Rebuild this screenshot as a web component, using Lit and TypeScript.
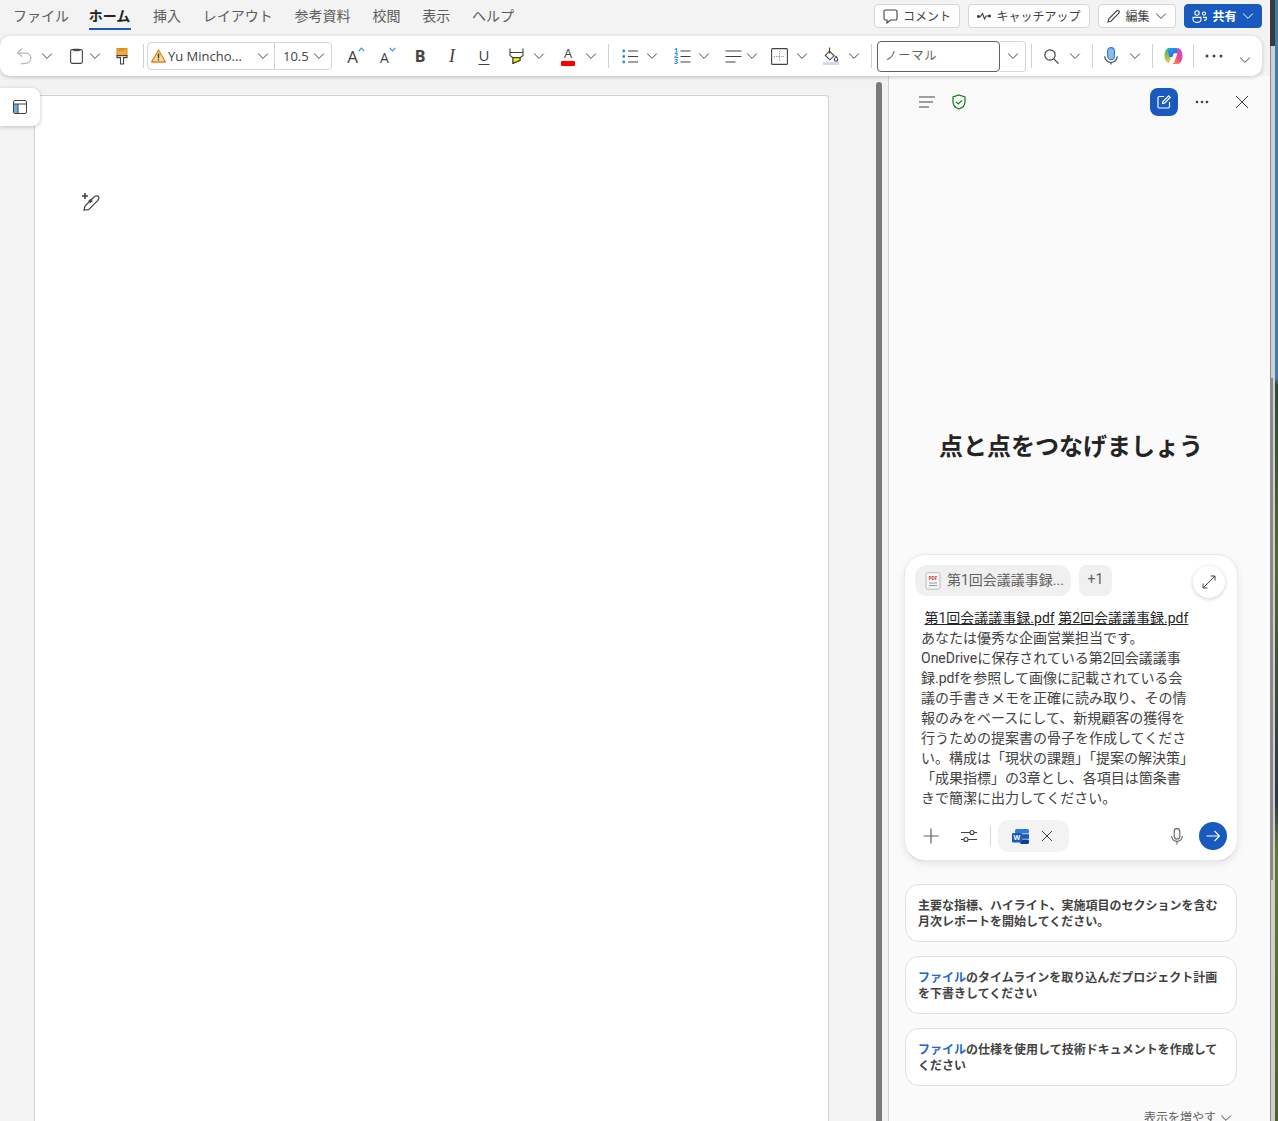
import { LitElement, html, svg, css } from "lit";
import { customElement } from "lit/decorators.js";

const chev = html`<svg class="chev" width="12" height="12" viewBox="0 0 12 12"><path d="M1.2 3.6L6 8.4l4.8-4.8" fill="none" stroke="#424242" stroke-width="1"/></svg>`;
const icon = (w: number, h: number, body: unknown) =>
  html`<svg width=${w} height=${h} viewBox="0 0 ${w} ${h}" fill="none" stroke="#424242" stroke-width="1.1">${body}</svg>`;

const undo = icon(16, 18, svg`<path d="M6 1.5L1.6 6l4.8 3.8" stroke="#b5b5b5" stroke-width="1.2"/><path d="M2 6.2h7.6a5 5 0 0 1 1.2 9.9L5 16.8" stroke="#b5b5b5" stroke-width="1.2"/>`);
const clip = icon(13, 16, svg`<rect x=".6" y="1.6" width="11.8" height="13.8" rx="1.6"/><path d="M3.6 1.2h5.8v1.5H3.6z" fill="#424242" stroke-width=".8"/>`);
const brush = icon(12, 17, svg`<path d="M1 .6h10v7H1z" fill="#f4a93c" stroke="#e08d1d"/><path d="M4 .8v2.4M7 .8v2.4" stroke="#c77a10"/><path d="M1 7.6h10v2H7.5v6.4h-3V9.6H1z" fill="#fff" stroke="#424242"/>`);
const warn = icon(15, 14, svg`<path d="M7.5 1L14.4 13H.6z" fill="#fcdc9b" stroke="#e2801a" stroke-width="1.3" stroke-linejoin="round"/><path d="M7.5 4.6v4.6M7.5 10.2v1.4" stroke="#333" stroke-width="1.4"/>`);
const grow = html`<span class="aa"><span class="a-big">A</span><svg width="7" height="5" viewBox="0 0 7 5"><path d="M.8 4.2L3.5 1l2.7 3.2" fill="none" stroke="#2b88d8" stroke-width="1.1"/></svg></span>`;
const shrink = html`<span class="aa"><span class="a-small">A</span><svg width="7" height="5" viewBox="0 0 7 5"><path d="M.8 .8L3.5 4l2.7-3.2" fill="none" stroke="#2b88d8" stroke-width="1.1"/></svg></span>`;
const highlight = icon(15, 16, svg`<path d="M1 .5v4h13v-4M1 4.5v3l3 2.2v5.6l7-3V9.7l3-2.2v-3" />
  <path d="M4 9.6h7v2.7l-7 3z" fill="#fff200" stroke="#424242"/>`);
const fontColor = html`<span class="fcolor"><span>A</span><i></i></span>`;
const bullets = icon(16, 15, svg`<circle cx="1.8" cy="2" r="1.4" fill="#2b88d8" stroke="none"/><circle cx="1.8" cy="7.5" r="1.4" fill="#2b88d8" stroke="none"/><circle cx="1.8" cy="13" r="1.4" fill="#2b88d8" stroke="none"/><path d="M6 2h10M6 7.5h10M6 13h10"/>`);
const numbers = html`<span class="numlist"><span class="nums">1 2 3</span>${icon(11, 15, svg`<path d="M.5 2h10M.5 7.5h10M.5 13h10"/>`)}</span>`;
const align = icon(17, 15, svg`<path d="M.5 2h16M.5 7.5h16M.5 13h10"/>`);
const borders = icon(17, 17, svg`<rect x=".6" y=".6" width="15.8" height="15.8" rx="1"/><path d="M8.5 3v11M3 8.5h11" stroke="#8a8a8a" stroke-dasharray="1 1.2"/>`);
const fill = icon(16, 18, svg`<path d="M6.5 4.2l4.6 4.6-4.2 4-4.6-4.4z M6.5 .5v6"/><path d="M13 9.4c1 1.4 1.7 2.2 1.7 3.1a1.7 1.7 0 0 1-3.4 0c0-.9.7-1.7 1.7-3.1z"/><path d="M0 15h16v3H0z" fill="#cddcf1" stroke="none"/>`);
const search = icon(15, 15, svg`<circle cx="6" cy="6" r="5.2" stroke-width="1.2"/><path d="M9.8 9.8L14.6 14.6" stroke-width="1.2"/>`);
const micBlue = icon(14, 18, svg`<rect x="3.6" y=".6" width="6.8" height="12" rx="3.4" fill="#8fbce6" stroke="#2b7cd3"/><path d="M.7 9.2a6.3 6.3 0 0 0 12.6 0M7 15.5v2" stroke="#424242"/>`);
const copilot = html`<svg width="19" height="18" viewBox="0 0 19 18">
  <defs>
    <linearGradient id="cpa" x1="0" y1="0" x2="1" y2="1"><stop offset="0" stop-color="#19b4e6"/><stop offset=".6" stop-color="#2f6fe8"/><stop offset="1" stop-color="#7a4fe0"/></linearGradient>
    <linearGradient id="cpb" x1="0" y1="1" x2="1" y2="0"><stop offset="0" stop-color="#f9a825"/><stop offset=".5" stop-color="#f0468f"/><stop offset="1" stop-color="#b650e6"/></linearGradient>
    <linearGradient id="cpc" x1="0" y1="0" x2="0" y2="1"><stop offset="0" stop-color="#22b884"/><stop offset="1" stop-color="#f7c52b"/></linearGradient>
  </defs>
  <path d="M5 1h4L5.6 14.6C5.2 16 4.4 16 3.8 15.6 1.6 14.4.4 12 .5 9 .6 5 2 1 5 1z" fill="url(#cpc)"/>
  <path d="M5.2 1h7.2c1.2 0 1.8 1 2 2l.8 3.4H9.6L8.4 10H5.5L3.8 4.6C3.4 2.8 3.9 1 5.2 1z" fill="url(#cpa)"/>
  <path d="M13.6 1c3 .2 5 3.6 4.9 8-.1 4-1.9 8-5 8H7.4c1.6-.4 2.4-1.8 3-3.6L13 5.4z" fill="url(#cpb)"/>
  <path d="M8.8 10.8l1.3-4.4h3.4l-2.6 7.2c-.6 1.8-1.6 3.2-3.4 3.4H5.6c1.6-.6 2.5-3.6 3.2-6.2z" fill="#fff" fill-opacity=".92"/>
</svg>`;
const dots = html`<svg width="18" height="4" viewBox="0 0 18 4"><circle cx="2" cy="2" r="1.5" fill="#424242"/><circle cx="9" cy="2" r="1.5" fill="#424242"/><circle cx="16" cy="2" r="1.5" fill="#424242"/></svg>`;
const pdf = html`<svg width="16" height="18" viewBox="0 0 16 18"><rect x="1" y=".7" width="14" height="16.6" rx="2" fill="#f5f5f5" stroke="#bdbdbd"/><text x="8" y="8" class="pdf" text-anchor="middle">PDF</text><path d="M4 11h8M4 13.5h8" stroke="#9a9a9a"/></svg>`;
const word = html`<svg width="17" height="15" viewBox="0 0 17 15"><rect x="3" y="0" width="14" height="4.6" rx="1.5" fill="#2b7cd3"/><rect x="8" y="5.2" width="9" height="4.6" fill="#185abd"/><rect x="8" y="10.4" width="9" height="4.6" rx="1.4" fill="#103f91"/><rect x="0" y="4" width="10" height="9.5" rx="1.2" fill="#185abd"/><text x="5" y="11.4" class="w" text-anchor="middle">W</text></svg>`;

// left edge and width of every ribbon item, measured off the toolbar
const tools: [number, number, unknown][] = [
  [12, 24, undo], [39, 16, chev], [64, 24, clip], [87, 16, chev], [112, 20, brush], [143, 1, "sep"],
  [147, 185, "font"], [344, 24, grow], [376, 24, shrink],
  [408, 24, html`<b class="fb">B</b>`], [440, 24, html`<i class="fi">I</i>`], [472, 24, html`<u class="fu">U</u>`],
  [504, 24, highlight], [531, 16, chev], [556, 24, fontColor], [583, 16, chev], [608, 1, "sep"],
  [618, 24, bullets], [644, 16, chev], [670, 24, numbers], [696, 16, chev], [721, 24, align], [744, 16, chev],
  [767, 24, borders], [794, 16, chev], [819, 24, fill], [846, 16, chev], [871, 1, "sep"],
  [877, 149, "style"], [1031, 1, "sep"], [1039, 24, search], [1067, 16, chev], [1092, 1, "sep"],
  [1099, 24, micBlue], [1127, 16, chev], [1152, 1, "sep"], [1161, 24, copilot], [1193, 1, "sep"],
  [1202, 24, dots], [1237, 16, "last"],
];

@customElement("app-root")
export class AppRoot extends LitElement {
  static styles = css`
    :host {
      display: flex;
      width: 1278px;
      height: 1121px;
      overflow: hidden;
      font-family: "Open Sans", "Noto Sans CJK JP", sans-serif;
      color: #424242;
    }
    .app {
      width: 1270px;
      height: 1121px;
      background: #f3f3f3;
      display: flex;
      flex-direction: column;
      position: relative;
    }
    .edge {
      width: 5px;
      background: #cfcfcf;
      border-left: 1px solid #8a8a8a;
      box-sizing: border-box;
      position: relative;
    }
    .edge::before {
      content: "";
      display: block;
      height: 46px;
      background: #3a3a3a;
      margin-left: -1px;
    }
    .edge::after {
      content: "";
      position: absolute;
      left: 0;
      top: 378px;
      height: 502px;
      width: 2px;
      background: #8a8a8a;
    }
    .wall {
      width: 3px;
      background: linear-gradient(#3e7cad 0, #3e7cad 378px, #2c4a36 385px, #4f6a2a 560px, #26384a 800px, #5d7a2e 850px, #4c6426 100%);
    }

    .top {
      height: 36px;
      flex: none;
      display: flex;
      align-items: flex-start;
      justify-content: space-between;
      padding-right: 8px;
      box-sizing: border-box;
    }
    .tabs {
      display: flex;
      padding-left: 2px;
    }
    .tab {
      height: 30px;
      line-height: 31px;
      padding: 0 10.9px;
      font-size: 14px;
      color: #5c5c5c;
      box-sizing: border-box;
      position: relative;
      white-space: nowrap;
    }
    .tab.on {
      font-weight: 700;
      color: #242424;
      margin: 0 1px 0 -2px;
    }
    .tab.on::after {
      content: "";
      position: absolute;
      left: 11px;
      right: 10px;
      bottom: 0;
      height: 2px;
      background: #185abd;
    }
    .actions {
      display: flex;
      gap: 8px;
      padding-top: 4px;
    }
    .act {
      height: 24px;
      box-sizing: border-box;
      display: flex;
      align-items: center;
      justify-content: center;
      gap: 5px;
      background: #fff;
      border: 1px solid #d6d6d6;
      border-radius: 4px;
      font-size: 12px;
      color: #424242;
      white-space: nowrap;
    }
    .comment { width: 86px; }
    .catch { width: 122px; }
    .edit { width: 78px; }
    .share {
      width: 78px;
      background: #185abd;
      border-color: #185abd;
      color: #fff;
      font-weight: 700;
    }
    .share .chev path { stroke: #fff; }

    .ribbon {
      height: 40px;
      width: 1262px;
      flex: none;
      display: flex;
      align-items: center;
      background: #fff;
      border-radius: 10px;
      box-shadow: 0 1px 4px rgba(0, 0, 0, 0.22);
      position: relative;
      z-index: 2;
    }
    .tool {
      flex: none;
      display: flex;
      align-items: center;
      justify-content: center;
    }
    .sep {
      height: 24px;
      background: #d1d1d1;
    }
    .last { padding-top: 8px; }
    .combo {
      height: 28px;
      box-sizing: border-box;
      border: 1px solid #d6d6d6;
      border-radius: 4px;
      display: flex;
      align-items: center;
      font-size: 13px;
      color: #424242;
    }
    .fname {
      width: 123px;
      height: 100%;
      display: flex;
      align-items: center;
      gap: 2px;
      padding-left: 3px;
      border-right: 1px solid #d6d6d6;
      box-sizing: content-box;
      white-space: nowrap;
    }
    .fname span { flex: 1; }
    .fname .chev { margin-right: 5px; }
    .fsize {
      flex: 1;
      display: flex;
      align-items: center;
      justify-content: space-between;
      padding: 0 6px 0 8px;
    }
    .style {
      height: 31px;
      display: flex;
      align-items: stretch;
    }
    .sname {
      width: 123px;
      box-sizing: border-box;
      border: 1.5px solid #616161;
      border-radius: 4px;
      font-size: 12px;
      line-height: 27px;
      padding-left: 7px;
      color: #616161;
      letter-spacing: 1.2px;
    }
    .sdrop {
      flex: 1;
      display: flex;
      align-items: center;
      justify-content: center;
      border: 1px solid #d6d6d6;
      border-left: none;
      border-radius: 0 4px 4px 0;
    }
    .aa { display: flex; align-items: flex-start; height: 22px; }
    .aa svg { margin-top: 2px; }
    .a-big { font-size: 17px; line-height: 24px; color: #424242; }
    .a-small { font-size: 14px; line-height: 26px; color: #424242; }
    .fb { font-size: 16px; color: #424242; font-weight: 700; }
    .fi { font-family: "Liberation Serif", serif; font-size: 18px; color: #424242; }
    .fu { font-size: 15px; line-height: 18px; margin-bottom: 3px; color: #424242; text-underline-offset: 3px; }
    .fcolor {
      display: flex;
      flex-direction: column;
      align-items: center;
      width: 14px;
      font-size: 13px;
      line-height: 13px;
      color: #424242;
    }
    .fcolor i {
      display: block;
      width: 14px;
      height: 5px;
      margin-top: 1px;
      background: #f00;
      border-radius: 1px;
    }
    .numlist {
      display: flex;
      align-items: center;
      gap: 1px;
    }
    .nums {
      width: 5px;
      font-size: 7px;
      line-height: 5.6px;
      font-weight: 700;
      color: #2b88d8;
      text-align: center;
    }
    .pdf { font: 700 4.5px "Open Sans", sans-serif; fill: #d13438; }
    .w { font: 700 7px "Open Sans", sans-serif; fill: #fff; }

    .main {
      flex: 1;
      min-height: 0;
      display: flex;
    }
    .canvas {
      width: 876px;
      flex: none;
      box-sizing: border-box;
      padding: 19px 0 0 34px;
      position: relative;
    }
    .page {
      width: 795px;
      height: 100%;
      box-sizing: border-box;
      background: #fff;
      border: 1px solid #d1d1d1;
      border-bottom: none;
      border-radius: 3px 3px 0 0;
      position: relative;
    }
    .wand {
      position: absolute;
      left: 46px;
      top: 96px;
    }
    .nav {
      position: absolute;
      left: 0;
      top: 12px;
      width: 40px;
      height: 38px;
      background: #fff;
      border-radius: 0 8px 8px 0;
      box-shadow: 0 1px 4px rgba(0, 0, 0, 0.22);
      display: flex;
      align-items: center;
      justify-content: center;
    }
    .bar {
      width: 6px;
      flex: none;
      margin: 6px 6px 0 0;
      background: #7a7a7a;
      border-radius: 3px 3px 0 0;
    }
    .panel {
      flex: 1;
      min-width: 0;
      background: #fafafa;
      border-left: 1px solid #d1d1d1;
      overflow: hidden;
      padding: 12px 0 0 16px;
      box-sizing: border-box;
      font-family: Roboto, "Noto Sans CJK JP", sans-serif;
    }
    .phead {
      height: 28px;
      display: flex;
      align-items: center;
      padding-left: 14px;
      width: 350px;
      box-sizing: border-box;
    }
    .shield { margin-left: 16px; }
    .newchat {
      margin-left: auto;
      width: 28px;
      height: 28px;
      border-radius: 8px;
      background: #185abd;
      display: flex;
      align-items: center;
      justify-content: center;
    }
    .pdots { margin: 0 0 0 17px; }
    .close { margin: 0 6px 0 26px; }
    h1 {
      width: 332px;
      margin: 315px 0 92px;
      font-size: 24px;
      line-height: 32px;
      font-weight: 700;
      text-align: center;
      color: #242424;
    }
    .card {
      width: 332px;
      height: 305px;
      box-sizing: border-box;
      background: #fff;
      border-radius: 20px;
      padding: 10px 12px 8px 10px;
      box-shadow: 0 0 0 1px #e8e8e8, 0 1px 0 #8f8f8f, 0 3px 8px rgba(0, 0, 0, 0.1);
    }
    .chips {
      display: flex;
      gap: 8px;
      align-items: flex-start;
    }
    .chip {
      height: 31px;
      background: #f0f0f0;
      border-radius: 12px;
      display: flex;
      align-items: center;
      padding-bottom: 3px;
      box-sizing: border-box;
      font-size: 14px;
      color: #616161;
      white-space: nowrap;
    }
    .file { width: 156px; padding-left: 10px; gap: 6px; }
    .file svg { margin-top: 3px; }
    .plus1 { width: 33px; justify-content: center; border-radius: 8px; }
    .expand {
      margin: 1px 0 0 auto;
      width: 32px;
      height: 32px;
      border-radius: 50%;
      background: #fff;
      box-shadow: 0 1px 4px rgba(0, 0, 0, 0.2);
      display: flex;
      align-items: center;
      justify-content: center;
    }
    .prompt {
      margin: 10px 0 12px 6px;
      font-size: 14px;
      line-height: 20px;
      color: #424242;
      white-space: nowrap;
    }
    .prompt u { color: #242424; }
    .tools {
      display: flex;
      align-items: center;
      height: 32px;
      margin-right: -2px;
    }
    .tplus { margin-left: 8px; }
    .tsliders { margin-left: 21px; }
    .tsep { width: 1px; height: 20px; background: #d6d6d6; margin: 0 7px 0 12px; }
    .wordchip {
      width: 71px;
      height: 32px;
      border-radius: 10px;
      background: #f3f3f3;
      display: flex;
      align-items: center;
      gap: 12px;
      padding-left: 14px;
      box-sizing: border-box;
    }
    .tmic { margin-left: auto; }
    .send {
      margin: 0 0 0 16px;
      width: 28px;
      height: 28px;
      border-radius: 50%;
      background: #185abd;
      display: flex;
      align-items: center;
      justify-content: center;
    }
    .sugs {
      width: 332px;
      margin-top: 24px;
      display: flex;
      flex-direction: column;
      gap: 14px;
    }
    .sug {
      height: 58px;
      box-sizing: border-box;
      background: #fff;
      border: 1px solid #e0e0e0;
      border-radius: 14px;
      padding: 13px 12px;
      font-size: 12px;
      line-height: 16px;
      font-weight: 700;
      color: #424242;
      white-space: nowrap;
    }
    .sug em {
      font-style: normal;
      color: #2266d0;
    }
    .more {
      width: 332px;
      margin-top: 24px;
      padding-right: 5px;
      box-sizing: border-box;
      display: flex;
      justify-content: flex-end;
      align-items: center;
      gap: 4px;
      font-size: 12px;
      line-height: 16px;
      color: #616161;
    }
  `;

  renderTool(width: number, body: unknown, margin: number) {
    const st = `margin-left:${margin}px;width:${width}px`;
    if (body === "sep") return html`<div class="tool sep" style=${st}></div>`;
    if (body === "last") return html`<div class="tool last" style=${st}>${chev}</div>`;
    if (body === "font")
      return html`<div class="tool combo" style=${st}>
        <div class="fname">${warn}<span>Yu Mincho...</span>${chev}</div>
        <div class="fsize"><span>10.5</span>${chev}</div>
      </div>`;
    if (body === "style")
      return html`<div class="tool style" style=${st}>
        <div class="sname">ノーマル</div>
        <div class="sdrop">${chev}</div>
      </div>`;
    return html`<div class="tool" style=${st}>${body}</div>`;
  }

  render() {
    let right = 0;
    const items = tools.map(([left, w, body]) => {
      const m = left - right;
      right = left + w;
      return this.renderTool(w, body, m);
    });
    return html`
      <div class="app">
        <div class="top">
          <div class="tabs">
            <div class="tab">ファイル</div>
            <div class="tab on">ホーム</div>
            <div class="tab">挿入</div>
            <div class="tab">レイアウト</div>
            <div class="tab">参考資料</div>
            <div class="tab">校閲</div>
            <div class="tab">表示</div>
            <div class="tab">ヘルプ</div>
          </div>
          <div class="actions">
            <div class="act comment">
              ${icon(15, 15, svg`<path d="M2.5 1h10A1.5 1.5 0 0 1 14 2.5v7a1.5 1.5 0 0 1-1.5 1.5H7.5L4 14v-3H2.5A1.5 1.5 0 0 1 1 9.5v-7A1.5 1.5 0 0 1 2.5 1z"/>`)}
              コメント
            </div>
            <div class="act catch">
              ${icon(14, 8, svg`<path d="M2 4.5h1.5l2-3 2 5.5 1.6-3H12"/><circle cx="1.5" cy="4.5" r="1" fill="#424242"/><circle cx="12.5" cy="4" r="1" fill="#424242"/>`)}
              キャッチアップ
            </div>
            <div class="act edit">
              ${icon(13, 13, svg`<path d="M1 12l.8-3.2L9.6 1a1.4 1.4 0 0 1 2.2 2.2L4.2 11z"/>`)}
              編集 ${chev}
            </div>
            <div class="act share">
              <svg width="15" height="13" viewBox="0 0 15 13" fill="none" stroke="#fff" stroke-width="1.1"><circle cx="5" cy="3" r="2.2"/><path d="M1 7.4h8v1.8C9 11.2 7.2 12.4 5 12.4S1 11.2 1 9.2z"/><circle cx="12" cy="3.6" r="1.6"/><path d="M11 7.4h3.4v1.2c0 1-.8 1.8-2.4 1.8"/></svg>
              共有 ${chev}
            </div>
          </div>
        </div>
        <div class="ribbon">${items}</div>
        <div class="main">
          <div class="canvas">
            <div class="page">
              <svg class="wand" width="20" height="20" viewBox="0 0 20 20" fill="none" stroke="#424242" stroke-width="1.2">
                <path d="M4 1v6M1 4h6" stroke-width="1.6"/>
                <path d="M3 18l1-4 9-9c1.2-1.2 3.6-1.4 4.4-.6s.4 3-.8 4.2l-9 9z"/>
                <path d="M9.5 7v4M7.5 9h4" stroke-width="1.3"/>
              </svg>
            </div>
            <div class="nav">
              <svg width="14" height="14" viewBox="0 0 14 14"><rect x=".5" y=".5" width="13" height="13" rx="1.5" fill="#fff" stroke="#424242"/><rect x="1" y="4" width="4" height="9" fill="#6aaee6"/><path d="M.5 4h13M5 4v9.5" stroke="#424242" fill="none"/></svg>
            </div>
          </div>
          <div class="bar"></div>
          <div class="panel">
            <div class="phead">
              ${icon(16, 12, svg`<path d="M0 1h16M0 6h14M0 11h10"/>`)}
              <svg class="shield" width="16" height="16" viewBox="0 0 16 16" fill="none" stroke="#107c10" stroke-width="1.2"><path d="M8 1l6 2v5c0 3.6-2.6 5.8-6 7-3.4-1.2-6-3.4-6-7V3z"/><path d="M5 7.8l2.2 2.2L11 6.4"/></svg>
              <div class="newchat">
                <svg width="16" height="16" viewBox="0 0 16 16" fill="none" stroke="#fff" stroke-width="1.2"><path d="M8 2.5H3.5a1.5 1.5 0 0 0-1.5 1.5v8.5A1.5 1.5 0 0 0 3.5 14H12a1.5 1.5 0 0 0 1.5-1.5V8"/><path d="M6.5 9.5l.4-2L12.6 1.8l1.6 1.6L8.5 9.1z"/></svg>
              </div>
              <svg class="pdots" width="14" height="4" viewBox="0 0 14 4"><circle cx="2" cy="2" r="1.3" fill="#424242"/><circle cx="7" cy="2" r="1.3" fill="#424242"/><circle cx="12" cy="2" r="1.3" fill="#424242"/></svg>
              <svg class="close" width="14" height="14" viewBox="0 0 14 14"><path d="M1 1l12 12M13 1L1 13" stroke="#424242" stroke-width="1"/></svg>
            </div>
            <h1>点と点をつなげましょう</h1>
            <div class="card">
              <div class="chips">
                <div class="chip file">${pdf}第1回会議議事録...</div>
                <div class="chip plus1">+1</div>
                <div class="expand">
                  <svg width="14" height="14" viewBox="0 0 14 14" fill="none" stroke="#424242" stroke-width="1"><path d="M8.5 1h4.5v4.5M13 1L1 13M1 8.5V13h4.5"/></svg>
                </div>
              </div>
              <div class="prompt">
                &nbsp;<u>第1回会議議事録.pdf</u> <u>第2回会議議事録.pdf</u><br />
                あなたは優秀な企画営業担当です。<br />
                OneDriveに保存されている第2回会議議事<br />
                録.pdfを参照して画像に記載されている会<br />
                議の手書きメモを正確に読み取り、その情<br />
                報のみをベースにして、新規顧客の獲得を<br />
                行うための提案書の骨子を作成してくださ<br />
                い。構成は「現状の課題」「提案の解決策」<br />
                「成果指標」の3章とし、各項目は箇条書<br />
                きで簡潔に出力してください。
              </div>
              <div class="tools">
                <svg class="tplus" width="16" height="16" viewBox="0 0 16 16"><path d="M8 .5v15M.5 8h15" stroke="#616161" stroke-width="1.2"/></svg>
                <svg class="tsliders" width="18" height="14" viewBox="0 0 18 14" fill="none" stroke="#424242" stroke-width="1.1"><path d="M1 3.5h9M14 3.5h3M1 10.5h3M8 10.5h9"/><circle cx="12" cy="3.5" r="2"/><circle cx="6" cy="10.5" r="2"/></svg>
                <div class="tsep"></div>
                <div class="wordchip">
                  ${word}
                  <svg width="12" height="12" viewBox="0 0 12 12"><path d="M1 1l10 10M11 1L1 11" stroke="#424242" stroke-width="1"/></svg>
                </div>
                <svg class="tmic" width="12" height="17" viewBox="0 0 12 17" fill="none" stroke="#616161" stroke-width="1.1"><rect x="3.2" y=".6" width="5.6" height="10.4" rx="2.8"/><path d="M.6 8a5.4 5.4 0 0 0 10.8 0M6 13.6V16.6"/></svg>
                <div class="send">
                  <svg width="14" height="12" viewBox="0 0 14 12" fill="none" stroke="#fff" stroke-width="1.1"><path d="M.5 6h13M8.5 1l5 5-5 5"/></svg>
                </div>
              </div>
            </div>
            <div class="sugs">
              <div class="sug">主要な指標、ハイライト、実施項目のセクションを含む<br />月次レポートを開始してください。</div>
              <div class="sug"><em>ファイル</em>のタイムラインを取り込んだプロジェクト計画<br />を下書きしてください</div>
              <div class="sug"><em>ファイル</em>の仕様を使用して技術ドキュメントを作成して<br />ください</div>
            </div>
            <div class="more">表示を増やす ${chev}</div>
          </div>
        </div>
      </div>
      <div class="edge"></div>
      <div class="wall"></div>
    `;
  }
}
